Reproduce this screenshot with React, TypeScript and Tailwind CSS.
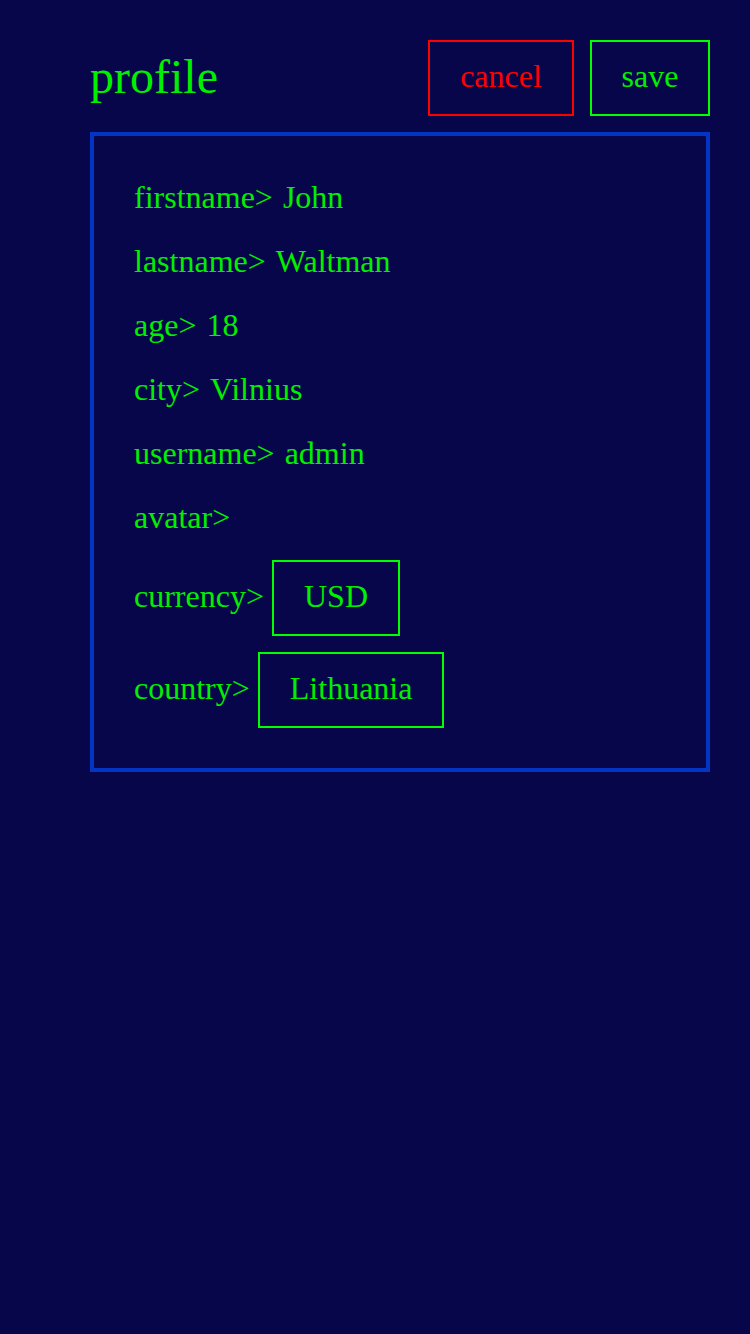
export default function App() {
    const fields = [
        { label: "firstname", value: "John" },
        { label: "lastname", value: "Waltman" },
        { label: "age", value: "18" },
        { label: "city", value: "Vilnius" },
        { label: "username", value: "admin" },
        { label: "avatar", value: "" },
    ];

    const selects = [
        { label: "currency", value: "USD" },
        { label: "country", value: "Lithuania" },
    ];

    return (
        <div
            className="min-h-[1334px] bg-[#08064a] pt-10 pl-[90px] pr-10 text-[#00f000]"
            style={{ fontFamily: '"Liberation Serif", serif' }}
        >
            {/* Header */}
            <div className="flex items-center justify-between h-[76px]">
                <h1 className="text-[48px] leading-[55px] pb-1 text-[#00f000]">profile</h1>
                <div className="flex gap-4">
                    <button className="h-[76px] w-[146px] pb-[5px] flex items-center justify-center border-2 border-[#ff0000] text-[#ff0000] text-[32px]">
                        cancel
                    </button>
                    <button className="h-[76px] w-[120px] pb-[5px] flex items-center justify-center border-2 border-[#00ff00] text-[#00f000] text-[32px]">
                        save
                    </button>
                </div>
            </div>

            {/* Profile panel */}
            <div className="mt-4 border-4 border-[#0335c4] pt-[29px] pb-10 px-10 text-[32px]">
                {fields.map((field) => (
                    <div key={field.label} className="h-16 flex items-center whitespace-pre">
                        <span>{field.label}&gt; </span>
                        <span className="ml-[2px]">{field.value}</span>
                    </div>
                ))}
                <div className="mt-[11px] flex flex-col gap-4">
                    {selects.map((s) => (
                        <div key={s.label} className="flex items-center whitespace-pre">
                            <span className="pb-[5px]">{s.label}&gt; </span>
                            <div className="h-[76px] px-[30px] pb-[5px] flex items-center border-2 border-[#00ff00]">
                                {s.value}
                            </div>
                        </div>
                    ))}
                </div>
            </div>
        </div>
    );
}
